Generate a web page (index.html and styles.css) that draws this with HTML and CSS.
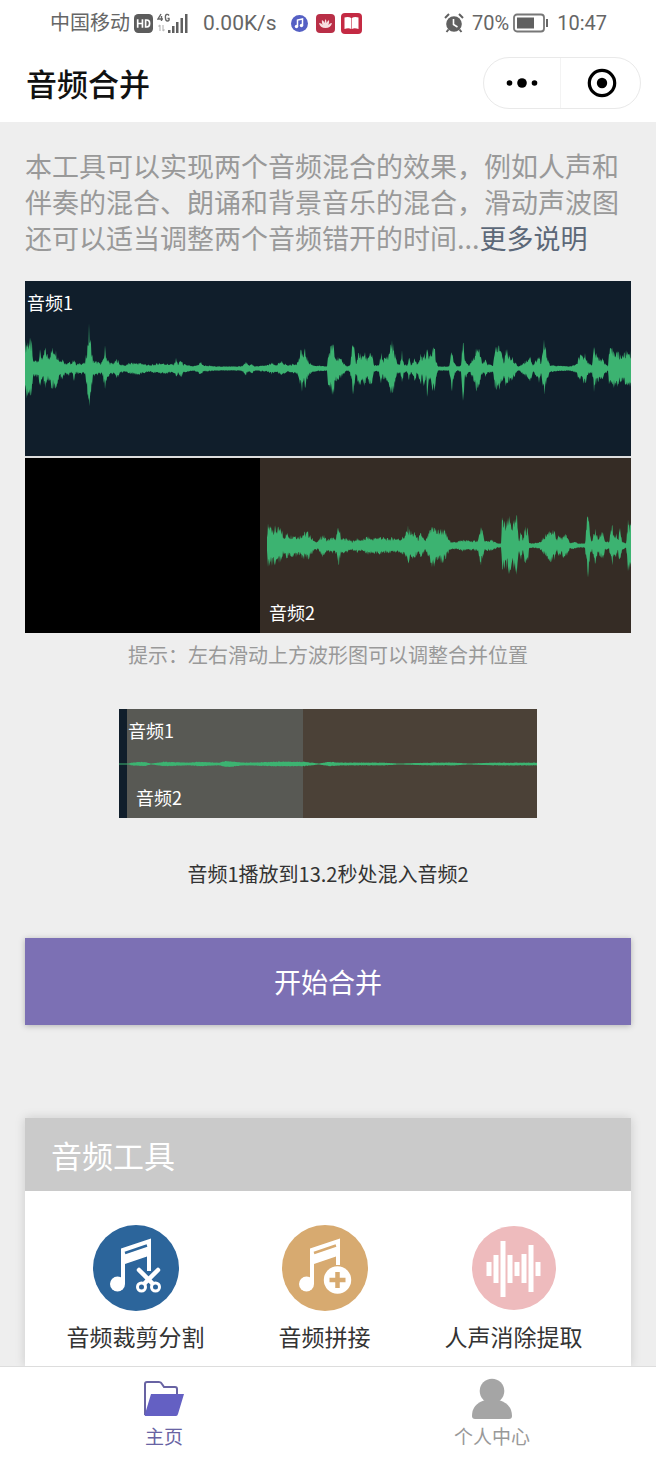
FILE: index.html
```html
<!DOCTYPE html>
<html lang="zh-CN">
<head>
<meta charset="utf-8">
<meta name="viewport" content="width=device-width, initial-scale=1">
<title>音频合并</title>
<link rel="stylesheet" href="styles.css">
</head>
<body>
<div class="app">
  <div class="status">
    <div class="status-group">
      <span class="carrier">中国移动</span>
      <svg class="hd" width="19" height="19" viewBox="0 0 18 18"><rect width="18" height="18" rx="4" fill="#5c5c5c"/><path d="M3.500 5v8M8 5v8M3.500 9H8M11 5.700v6.600h1q2.800 0 2.800-3.300T12 5.700z" fill="none" stroke="#fff" stroke-width="1.600"/></svg>
      <svg class="signal" width="32" height="22" viewBox="0 0 32 22"><path d="M4 2L1 7h5M4.500 4v5M12 3.500Q11 2 9.500 2.500T8.500 6Q8.500 9 10.500 9T12 6.500H10.500" fill="none" stroke="#666" stroke-width="1.400"/><path d="M3 13v6M1.500 14.500L3 13M6 13v6M7.500 17.500L6 19" fill="none" stroke="#bbb" stroke-width="1.200"/><path d="M11 18h2.500v3H11zM15 14h2.500v7H15zM19 10h2.500v11H19zM23.500 6H26v15h-2.500zM28 2h2.500v19H28z" fill="#5f5f5f"/></svg>
      <span class="speed">0.00K/s</span>
      <svg class="note-app" width="17" height="17" viewBox="0 0 17 17"><circle cx="8.500" cy="8.500" r="8.500" fill="#5560c4"/><path d="M6.500 11.500V5l5-1v6.500" fill="none" stroke="#fff" stroke-width="1.500"/><circle cx="5.500" cy="11.500" r="1.700" fill="#fff"/><circle cx="10.500" cy="10.500" r="1.700" fill="#fff"/></svg>
      <svg class="red-app" width="19" height="19" viewBox="0 0 19 19"><rect width="19" height="19" rx="4" fill="#b92f47"/><path d="M3 9q3 0 3.500 2Q5.500 7 6 6q2 1 2.500 3Q9 6 9.500 5q1 1 1 4 1-2 2.500-3 .5 2-.5 5 1-2 3.500-2-1 5-6.500 5T3 9z" fill="#f7dfe2"/></svg>
      <svg class="book-app" width="21" height="21" viewBox="0 0 21 21"><rect width="21" height="21" rx="4" fill="#c42a43"/><path d="M3.500 4.500q4-1 6.700.5v11q-2.700-1.500-6.700 0zM10.800 5q2.700-1.500 6.700-.5V16q-4-1.500-6.700 0z" fill="#fff"/></svg>
    </div>
    <div class="status-group">
      <svg class="alarm" width="20" height="20" viewBox="0 0 20 20"><circle cx="10" cy="11" r="7.800" fill="#606060"/><path d="M1 5l4-4M19 5l-4-4M4.500 16.500L2.500 19M15.500 16.500l2 2.500" stroke="#606060" stroke-width="2" fill="none"/><path d="M9.500 6v5.500l4 2.500" stroke="#fff" stroke-width="1.600" fill="none"/></svg>
      <span>70%</span>
      <svg width="36" height="20" viewBox="0 0 36 20"><rect x="1" y="1.500" width="30" height="17" rx="3" fill="none" stroke="#777" stroke-width="1.800"/><path d="M4 4.500h17v11H4z" fill="#606060"/><path d="M34 6v8" stroke="#666" stroke-width="2"/></svg>
      <span class="clock">10:47</span>
    </div>
  </div>

  <header class="nav">
    <h1 class="nav-title">音频合并</h1>
    <div class="capsule">
      <button class="capsule-btn" type="button" aria-label="更多"><svg width="32" height="12" viewBox="0 0 32 12"><circle cx="3.500" cy="6" r="2.800"/><circle cx="16" cy="6" r="4.800"/><circle cx="28.500" cy="6" r="2.800"/></svg></button>
      <button class="capsule-btn" type="button" aria-label="关闭"><svg width="30" height="30" viewBox="0 0 30 30"><circle cx="15" cy="15" r="12.700" fill="none" stroke="#000" stroke-width="3.200"/><circle cx="15" cy="15" r="5.200"/></svg></button>
    </div>
  </header>

  <main class="main">
    <p class="intro">本工具可以实现两个音频混合的效果，例如人声和伴奏的混合、朗诵和背景音乐的混合，滑动声波图还可以适当调整两个音频错开的时间...<a class="more" href="#more">更多说明</a></p>

    <section class="tracks">
      <div class="track track-one">
        <svg class="wave" viewBox="0 0 606 174" preserveAspectRatio="none"><path id="wave-one"/></svg>
        <span class="track-name">音频1</span>
      </div>
      <div class="track-row">
        <div class="track track-two">
          <svg class="wave" viewBox="0 0 371 174" preserveAspectRatio="none"><path id="wave-two"/></svg>
          <span class="track-name name-low">音频2</span>
        </div>
      </div>
    </section>
    <p class="hint">提示：左右滑动上方波形图可以调整合并位置</p>

    <section class="overview">
      <div class="overlap"></div>
      <svg class="wave" viewBox="0 0 418 109" preserveAspectRatio="none"><path id="wave-mini"/></svg>
      <div class="overview-names"><span>音频1</span><span class="second">音频2</span></div>
    </section>
    <p class="result">音频1播放到13.2秒处混入音频2</p>

    <button class="start" type="button">开始合并</button>

    <section class="card">
      <h2 class="card-title">音频工具</h2>
      <div class="tools">
        <a class="tool" href="#cut">
          <svg width="86" height="86" viewBox="0 0 86 86"><circle cx="43" cy="43" r="43" fill="#2c659b"/><circle cx="24.500" cy="59" r="7.500" fill="#fff"/><path d="M28 59V23.500L58 13.500V46h-4V31.500L32 39v20z" fill="#fff"/><path d="M32 28l22-7.500" stroke="#2c659b" stroke-width="2.500"/><path d="M46 45L61 60M65 45L50 60" stroke="#fff" stroke-width="4.500" stroke-linecap="round"/><circle cx="48.500" cy="62" r="4" fill="#2c659b" stroke="#fff" stroke-width="3"/><circle cx="62.500" cy="62" r="4" fill="#2c659b" stroke="#fff" stroke-width="3"/></svg>
          <span>音频裁剪分割</span>
        </a>
        <a class="tool" href="#join">
          <svg width="86" height="86" viewBox="0 0 86 86"><circle cx="43" cy="43" r="43" fill="#d7aa70"/><circle cx="24.500" cy="59" r="7.500" fill="#fff"/><path d="M28 59V23.500L58 13.500V40h-4V31.500L32 39v20z" fill="#fff"/><path d="M32 28l22-7.500" stroke="#d7aa70" stroke-width="2.500"/><circle cx="55.500" cy="55" r="13.700" fill="#fff"/><path d="M47.500 55h16M55.500 47v16" stroke="#d7aa70" stroke-width="4.500"/></svg>
          <span>音频拼接</span>
        </a>
        <a class="tool" href="#voice">
          <svg width="86" height="86" viewBox="0 0 86 86"><circle cx="43" cy="43" r="42" fill="#eebbbd"/><path d="M18 37v14M25 30v28M32 16v56M39 30v28M46 37v14M53 29v29M60 20v47M67 37v14" stroke="#fff" stroke-width="5"/></svg>
          <span>人声消除提取</span>
        </a>
      </div>
    </section>
  </main>

  <nav class="tabs">
    <a class="tab tab-on" href="#home">
      <svg width="42" height="42" viewBox="0 0 42 42"><path d="M2 37V6q0-2 2-2h12q2 0 3 2l2 3h11q2 0 2 2v6" fill="none" stroke="#6863a3" stroke-width="2"/><path d="M8 16h33l-6 20q-.5 2-2 2H3q-2 0-1-2z" fill="#6460c3"/></svg>
      <span>主页</span>
    </a>
    <a class="tab" href="#me">
      <svg width="42" height="42" viewBox="0 0 42 42"><circle cx="21" cy="13" r="12.300" fill="#a5a5a5"/><path d="M14 22h14q13 4 13 16 0 3-3 3H4q-3 0-3-3 0-12 13-16z" fill="#a5a5a5"/></svg>
      <span>个人中心</span>
    </a>
  </nav>
</div>
<script src="waves.js"></script>
</body>
</html>
```
FILE: styles.css
```css
* { box-sizing: border-box; }

body {
  margin: 0;
  background: #eeeeee;
  color: #333333;
  font-family: "Noto Sans CJK SC", sans-serif;
}

h1, h2, p { margin: 0; font-weight: 400; }
a { color: inherit; text-decoration: none; }
button { padding: 0; border: 0; background: none; font: inherit; cursor: pointer; }
svg { display: block; flex: none; }

.app { display: flex; flex-direction: column; min-height: 100vh; }

.status {
  display: flex;
  justify-content: space-between;
  height: 44px;
  padding: 2px 49px 0 50px;
  background: #ffffff;
  color: #666666;
  font-family: Roboto, "Noto Sans CJK SC", sans-serif;
  font-size: 20px;
  line-height: 24px;
}
.status-group { display: flex; align-items: center; gap: 4px; }
.speed { font-size: 21px; margin: 0 10px; }
.red-app { margin: 0 2px 0 4px; }
.alarm { margin-right: 4px; }
.clock { margin-left: 4px; }

.nav {
  display: flex;
  align-items: center;
  justify-content: space-between;
  height: 78px;
  padding: 0 15px 0 26px;
  background: #ffffff;
}
.nav-title { color: #111111; font-size: 31px; font-weight: 500; line-height: 40px; }
.capsule {
  display: flex;
  width: 158px;
  height: 52px;
  border: 1px solid #e9e9e9;
  border-radius: 26px;
}
.capsule-btn { display: grid; flex: 1; place-items: center; }
.capsule-btn + .capsule-btn { padding-left: 3px; border-left: 1px solid #f3f3f3; }

.main { display: flex; flex: 1; flex-direction: column; padding: 26px 25px 0; }

.intro { color: #999999; font-size: 27px; line-height: 36px; }
.more { color: #5c6878; }

.tracks { display: grid; gap: 2px; margin-top: 25px; background: #dddddd; color: #ffffff; }
.track { display: grid; height: 175px; }
.track > * { grid-area: 1 / 1; }
.track-one { background: #101e2b; }
.track-row { padding-left: 235px; background: #000000; }
.track-two { background: #352c25; }
.wave { width: 100%; height: 100%; fill: #3cb371; }
.track-name { align-self: start; padding: 8px 2px; font-size: 18px; line-height: 26px; }
.name-low { align-self: end; padding: 8px 9px; }

.hint { margin-top: 8px; color: #999999; font-size: 20px; line-height: 28px; text-align: center; }

.overview {
  display: grid;
  align-self: center;
  width: 418px;
  height: 109px;
  margin-top: 40px;
  background: #4b4137;
  color: #ffffff;
}
.overview > * { grid-area: 1 / 1; }
.overlap { width: 184px; border-left: 8px solid #101e2b; background: #585954; }
.overview-names {
  display: flex;
  flex-direction: column;
  justify-content: space-between;
  padding: 8px 9px;
  font-size: 18px;
  line-height: 26px;
}
.second { padding-left: 8px; }

.result { margin-top: 42px; font-size: 20px; line-height: 28px; text-align: center; }

.start {
  height: 87px;
  margin-top: 50px;
  background: #7c70b4;
  box-shadow: 0 1px 6px rgba(0, 0, 0, 0.25);
  color: #ffffff;
  font-size: 27px;
}

.card {
  flex: 1;
  margin-top: 93px;
  background: #ffffff;
  box-shadow: 0 0 10px rgba(0, 0, 0, 0.15);
}
.card-title {
  padding: 16px 26px;
  background: #cacaca;
  color: #ffffff;
  font-size: 31px;
  line-height: 41px;
}
.tools { display: grid; grid-template-columns: repeat(3, 1fr); padding: 34px 23px 0 16px; }
.tool {
  display: flex;
  flex-direction: column;
  align-items: center;
  gap: 10px;
  font-size: 23px;
  line-height: 30px;
  white-space: nowrap;
}

.tabs {
  position: relative;
  display: flex;
  height: 92px;
  border-top: 1px solid #dddddd;
  background: #ffffff;
}
.tab {
  display: flex;
  flex: 1;
  flex-direction: column;
  align-items: center;
  padding-top: 11px;
  gap: 2px;
  color: #999999;
  font-size: 19px;
  line-height: 28px;
}
.tab-on { color: #6863a3; }
```
FILE: waves.js
```js
// Envelopes are flat lists of x, amplitude pairs.
const one = [0,22,4,25,7,20,8,6,13,7,15,14,18,8,20,17,23,10,27,16,30,18,32,12,35,6,37,9,40,4,44,5,47,3,49,9,51,3,57,4,60,4,62,16,64,35,66,20,68,6,72,5,75,4,78,6,80,18,82,8,85,4,89,4,92,8,95,3,100,2,105,4,115,4,125,2,135,4,145,3,149,3,151,8,153,3,156,7,158,3,168,1,172,2,176,5,178,2,192,1,215,1,218,2,221,5,223,2,227,3,230,1,242,2,247,4,250,2,257,5,263,2,272,4,274,8,277,18,278,10,280,15,283,6,288,2,302,1,303,12,305,15,308,25,311,10,317,6,322,1,325,2,327,16,328,24,331,4,334,14,337,9,339,14,342,8,345,15,347,11,349,2,354,2,356,13,358,7,362,10,364,12,366,25,369,16,372,4,375,3,377,14,379,3,382,2,384,9,386,2,390,10,392,3,396,12,397,5,399,16,401,8,402,22,404,8,407,15,409,21,411,8,413,1,424,1,427,17,429,5,432,1,436,2,438,27,440,8,444,2,448,8,452,20,455,12,458,3,460,7,463,3,468,2,470,15,473,21,477,12,479,5,481,18,483,12,487,9,492,2,494,1,498,4,502,7,505,11,508,2,512,8,514,11,516,3,519,23,522,11,525,2,545,1,552,3,554,10,558,10,561,12,563,4,567,3,569,18,572,10,577,8,583,1,584,15,590,16,593,13,595,11,599,12,603,15,606,14];
const two = [7,6,8,17,12,16,17,14,22,13,23,7,27,10,30,8,35,9,38,7,43,10,48,11,52,6,54,3,58,3,63,9,67,4,72,6,75,5,79,16,81,6,87,5,92,3,97,5,103,4,107,7,112,5,120,7,127,5,133,6,140,5,145,8,148,15,152,10,155,10,158,5,161,10,165,3,168,8,173,18,177,12,180,13,183,14,187,8,189,4,193,2,203,4,213,3,218,4,221,16,223,9,225,3,232,4,237,1,241,1,242,22,246,17,249,23,253,17,257,24,259,4,261,12,263,4,265,15,268,13,269,2,273,1,280,2,285,8,291,14,295,10,297,3,299,9,302,5,303,9,307,8,310,2,315,2,318,1,325,1,326,12,328,30,330,8,332,3,335,14,338,5,343,13,345,3,349,2,352,18,354,6,356,10,358,5,360,14,362,3,366,1,368,20,371,18];
const mini = [0,0,10,0,12,1,25,2,32,0,45,2,70,1,80,2,100,1,107,3,125,1,155,2,185,2,200,0,210,2,222,1,240,1,265,1,280,0,310,1,335,1,350,0,375,1,400,1,418,1];

// Repeatable noise in 0..1 for a sample index.
function noise(n) {
  const v = Math.sin(n * 12.9898) * 43758.5453;
  return v - Math.floor(v);
}

function draw(id, points, mid, base, top) {
  const upper = [];
  const lower = [];
  let k = 0;
  for (let i = points[0] * 2; i <= points[points.length - 2] * 2; i++) {
    const x = i / 2;
    while (k < points.length - 4 && points[k + 2] < x) k += 2;
    const t = (x - points[k]) / (points[k + 2] - points[k]);
    const amp = points[k + 1] + t * (points[k + 3] - points[k + 1]);
    // Each sample falls between 60% of the envelope and a little above it.
    const up = amp * (0.6 + (top - 0.6) * noise(i));
    const down = amp * (0.6 + (top - 0.6) * noise(i + 5000));
    upper.push(x + "," + (mid - base - up).toFixed(1));
    lower.unshift(x + "," + (mid + base + down).toFixed(1));
  }
  document.getElementById(id).setAttribute("d", "M" + upper.concat(lower).join("L") + "Z");
}

draw("wave-one", one, 87, 1, 1.3);
draw("wave-two", two, 87, 1, 1.3);
draw("wave-mini", mini, 55, 0.5, 1);
```
